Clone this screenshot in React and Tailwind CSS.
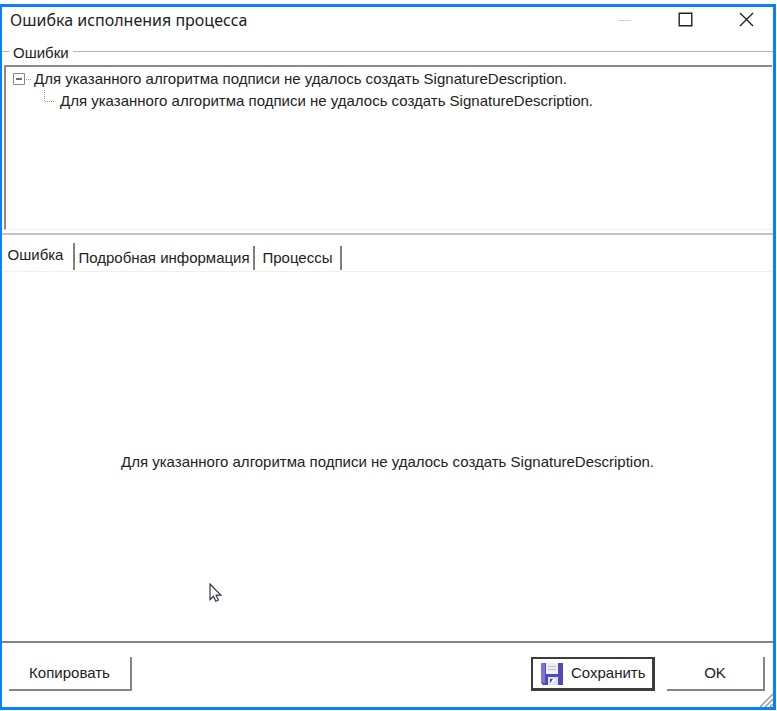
import { useState } from 'react';

const MESSAGE = 'Для указанного алгоритма подписи не удалось создать SignatureDescription.';

const TABS = [
  { id: 'error', label: 'Ошибка', width: 'w-[73px]' },
  { id: 'details', label: 'Подробная информация', width: 'w-[180px]' },
  { id: 'processes', label: 'Процессы', width: 'w-[87px]' },
];

function TitleBar() {
  return (
    <header className="flex h-[34px] items-start justify-between pl-2">
      <h1 className="pt-[3px] font-['Noto_Sans',sans-serif] text-[16px] leading-5 text-[#222]">Ошибка исполнения процесса</h1>
      <div className="flex">
        <button aria-label="Свернуть" disabled className="flex h-6 w-[61px] items-center justify-center">
          <svg width="15" height="15" viewBox="0 0 15 15" fill="none" stroke="#cfcfcf">
            <path d="M1 8.5h13" />
          </svg>
        </button>
        <button aria-label="Развернуть" className="flex h-6 w-[61px] items-center justify-center">
          <svg width="15" height="15" viewBox="0 0 15 15" fill="none" stroke="#222" strokeWidth="1.4">
            <path d="M1.2 1.2h12.6v12.6H1.2z" />
          </svg>
        </button>
        <button aria-label="Закрыть" className="flex h-6 w-[57px] items-center justify-center pl-1">
          <svg width="15" height="15" viewBox="0 0 15 15" fill="none" stroke="#222" strokeWidth="1.4">
            <path d="M1 1l13 13M14 1L1 14" />
          </svg>
        </button>
      </div>
    </header>
  );
}

function ErrorTree() {
  const [open, setOpen] = useState(true);

  return (
    <fieldset className="min-w-0 border-t border-[#b5b5b5]">
      <legend className="ml-[7px] px-1 pt-1 leading-4">Ошибки</legend>
      <ul className="mt-1 mr-px ml-0.5 h-[165px] border-t-2 border-b border-l-2 border-[#8c8c8c] border-b-[#f0f0f0] pt-px">
        <li>
          <div className="flex h-[22px] items-center pl-1.5">
            <button aria-label="Развернуть узел" aria-expanded={open} onClick={() => setOpen(!open)}>
              <svg width="22" height="14" viewBox="0 0 22 14" fill="none" stroke="#777">
                <path d="M1.5 1.5h11v11h-11z" stroke="#888" />
                <path d="M4 7h6" stroke="#333" strokeWidth="1.4" />
                {!open && <path d="M7 4v6" stroke="#333" strokeWidth="1.4" />}
                <path d="M14 7.5h5" stroke="#999" strokeDasharray="1 1" />
              </svg>
            </button>
            <span className="whitespace-nowrap">{MESSAGE}</span>
          </div>
          {open && (
            <ul>
              <li className="flex h-[22px] items-center pl-9">
                <svg width="18" height="22" viewBox="0 0 18 22" fill="none" stroke="#999" strokeDasharray="1 1">
                  <path d="M2.5 0v11M3 11.5h10" />
                </svg>
                <span className="whitespace-nowrap">{MESSAGE}</span>
              </li>
            </ul>
          )}
        </li>
      </ul>
      <div className="mt-[3px] h-0.5 bg-[#c4c4c4]" />
    </fieldset>
  );
}

function SaveIcon() {
  return (
    <svg width="22" height="22" viewBox="0 0 22 22">
      <path d="M0 0h22v22H2L0 20z" fill="#4f4abb" />
      <path d="M0 0h4v20H0z" fill="#7b77d8" />
      <path d="M5 0h12v11H5z" fill="#f0f0f2" />
      <path d="M7 3.5h8M7 6.5h8" stroke="#bdbdc4" />
      <path d="M7 14h10v8H7z" fill="#dcdff0" />
      <path d="M9 16h3l-3 4z" fill="#3a4a9c" />
      <path d="M12 16h3l-5 5z" fill="#fff" />
    </svg>
  );
}

function Cursor() {
  return (
    <svg className="absolute bottom-[38px] left-[207px]" width="13" height="20" viewBox="0 0 13 20" fill="#fff" stroke="#33334a" strokeWidth="1.2">
      <path d="M1 1v15.500l3.500-3.300 2.300 5 2.600-1.200-2.300-4.800h4.700z" />
    </svg>
  );
}

export default function App() {
  const [tab, setTab] = useState('error');

  return (
    <div className="flex min-h-screen flex-col bg-white pt-1 pr-px pb-px font-['Liberation_Sans',Arial,sans-serif] text-[15px] text-[#222]">
      <div className="relative flex flex-1 flex-col border-x-2 border-y-3 border-r-3 border-[#0a80fa]">
        <TitleBar />
        <ErrorTree />

        <div role="tablist" className="mt-2 flex items-end border-b border-[#f0f0f0] pb-px">
          {TABS.map((t) => (
            <button
              key={t.id}
              role="tab"
              aria-selected={tab === t.id}
              onClick={() => setTab(t.id)}
              className={`${t.width} border-r-2 border-[#808080] whitespace-nowrap ${tab === t.id ? 'h-[27px] pr-1 pb-0.5' : 'h-6'}`}
            >
              {t.label}
            </button>
          ))}
        </div>

        <main role="tabpanel" className="relative flex flex-1 items-center justify-center px-4 pt-3 text-center">
          {tab === 'error' && <p>{MESSAGE}</p>}
          <Cursor />
        </main>

        <footer className="flex h-[66px] items-start border-t-2 border-[#858585] pt-[14px] pr-2 pl-[7px]">
          <button className="h-[34px] w-[123px] border-r-2 border-b-2 border-[#858585]">Копировать</button>
          <button className="ml-auto flex h-[34px] w-[124px] items-center gap-2 border-2 border-r-3 border-b-3 border-[#3c3c3c] pl-2">
            <SaveIcon />
            Сохранить
          </button>
          <button className="ml-3 h-[34px] w-[98px] border-r-2 border-b-2 border-[#858585]">OK</button>
        </footer>

        <svg className="absolute right-0 bottom-0" width="14" height="14" viewBox="0 0 14 14" stroke="#999" strokeWidth="1.5">
          <path d="M1 14L14 1M6 14l8-8M11 14l3-3" />
        </svg>
      </div>
    </div>
  );
}
